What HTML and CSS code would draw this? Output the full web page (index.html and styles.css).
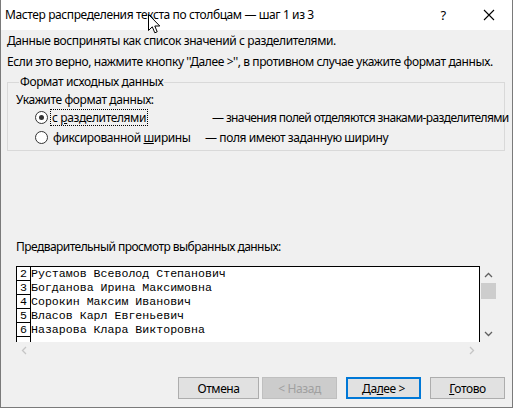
FILE: index.html
```html
<!DOCTYPE html>
<html lang="ru">
<head>
    <meta charset="UTF-8">
    <title>Мастер распределения текста по столбцам</title>
    <link rel="stylesheet" href="styles.css">
</head>
<body>
    <div class="window">
        <div class="titlebar">
            <span class="title">Мастер распределения текста по столбцам — шаг 1 из 3</span>
            <span class="tb-help">?</span>
            <span class="tb-close">
                <svg width="12" height="12" viewBox="0 0 12 12"><path d="M1 1L11 11M11 1L1 11" stroke="#000" stroke-width="1.1" fill="none"/></svg>
            </span>
            <svg class="cursor" width="13" height="20" viewBox="0 0 13 20">
                <path d="M0.5 0.5V16.5L4.3 12.8L6.8 18.8L9.2 17.8L6.8 12H11.8Z" fill="#fff" stroke="#000" stroke-width="1" stroke-linejoin="miter"/>
            </svg>
        </div>

        <div class="content">
            <p class="intro">Данные восприняты как список значений с разделителями.</p>
            <p class="intro">Если это верно, нажмите кнопку ''Далее &gt;'', в противном случае укажите формат данных.</p>

            <fieldset class="group">
                <legend>Формат исходных данных</legend>
                <div class="group-label">Укажите формат данных:</div>
                <div class="options">
                    <label class="radio">
                        <span class="dot checked"></span>
                        <span class="focus">с <u>р</u>азделителями</span>
                    </label>
                    <span class="desc first">— значения полей отделяются знаками-разделителями</span>
                    <label class="radio">
                        <span class="dot"></span>
                        <span class="plain">фиксированной <u>ш</u>ирины</span>
                    </label>
                    <span class="desc">— поля имеют заданную ширину</span>
                </div>
            </fieldset>

            <div class="preview-label">Предварительный просмотр выбранных данных:</div>
            <div class="preview">
                <div class="pane">
                    <div class="row"><span class="num">2</span><span class="cell">Рустамов Всеволод Степанович</span></div>
                    <div class="row"><span class="num">3</span><span class="cell">Богданова Ирина Максимовна</span></div>
                    <div class="row"><span class="num">4</span><span class="cell">Сорокин Максим Иванович</span></div>
                    <div class="row"><span class="num">5</span><span class="cell">Власов Карл Евгеньевич</span></div>
                    <div class="row"><span class="num">6</span><span class="cell">Назарова Клара Викторовна</span></div>
                    <div class="row"><span class="num"></span><span class="cell"></span></div>
                </div>
                <div class="vscroll">
                    <span class="arrow"><svg width="9" height="6" viewBox="0 0 9 6"><path d="M1 5L4.5 1.5L8 5" stroke="#606060" stroke-width="1.3" fill="none"/></svg></span>
                    <span class="thumb"></span>
                    <span class="track"></span>
                    <span class="arrow"><svg width="9" height="6" viewBox="0 0 9 6"><path d="M1 1L4.5 4.5L8 1" stroke="#606060" stroke-width="1.3" fill="none"/></svg></span>
                </div>
                <div class="hscroll">
                    <span class="arrow"><svg width="6" height="9" viewBox="0 0 6 9"><path d="M5 1L1.5 4.5L5 8" stroke="#c5c5c5" stroke-width="1.3" fill="none"/></svg></span>
                    <span class="arrow"><svg width="6" height="9" viewBox="0 0 6 9"><path d="M1 1L4.5 4.5L1 8" stroke="#c5c5c5" stroke-width="1.3" fill="none"/></svg></span>
                </div>
            </div>

            <div class="buttons">
                <button class="btn cancel">Отмена</button>
                <button class="btn disabled">&lt; Назад</button>
                <button class="btn default">Да<u>л</u>ее &gt;</button>
                <button class="btn"><u>Г</u>отово</button>
            </div>
        </div>
    </div>
</body>
</html>
```

FILE: styles.css
```css
/* Окно мастера */
body {
    margin: 0;
    background: #f0f0f0;
    font-family: "Noto Sans", "Open Sans", sans-serif;
    font-size: 12px;
    letter-spacing: -0.4px;
    color: #000;
}

.window {
    position: relative;
    width: 513px;
    height: 408px;
    box-sizing: border-box;
    border: 1px solid #7a7a7a;
    border-top: none;
    background: #f0f0f0;
}

/* Заголовок */
.titlebar {
    display: flex;
    align-items: center;
    height: 30px;
    background: #fff;
}

.title {
    flex: 1;
    padding-left: 4px;
    line-height: 30px;
}

.tb-help {
    width: 46px;
    text-align: center;
    font-size: 13px;
}

.tb-close {
    display: flex;
    justify-content: center;
    width: 46px;
}

.cursor {
    position: absolute;
    left: 147px;
    top: 14px;
}

/* Содержимое */
.content {
    padding: 0 7px 0 6px;
}

.intro {
    margin: 0;
    line-height: 21px;
    white-space: nowrap;
}

.group {
    margin: 2px 0 0;
    padding: 3px 0 3px 8px;
    border: 1px solid #d9d9d9;
    min-width: 0;
}

.group legend {
    margin-left: 3px;
    padding: 0 1px;
    line-height: 16px;
}

.group-label {
    line-height: 14px;
}

.options {
    display: grid;
    grid-template-columns: 170px auto;
    grid-auto-rows: 20px;
    align-items: center;
    padding-left: 19px;
}

.radio {
    display: flex;
    align-items: center;
}

.dot {
    width: 11px;
    height: 11px;
    border: 1px solid #333;
    border-radius: 50%;
    background: #fff;
    display: flex;
    align-items: center;
    justify-content: center;
    margin-right: 3px;
}

.dot.checked::after {
    content: "";
    width: 5px;
    height: 5px;
    border-radius: 50%;
    background: #333;
}

.focus {
    padding: 0 1px;
    line-height: 15px;
    outline: 1px dotted #000;
    outline-offset: 0;
}

.plain {
    padding-left: 2px;
}

.desc {
    white-space: nowrap;
}

.desc.first {
    margin-left: 7px;
    letter-spacing: -0.62px;
}

/* Предпросмотр */
.preview-label {
    margin: 88px 0 0 9px;
    line-height: 16px;
    letter-spacing: -0.55px;
}

.preview {
    display: grid;
    grid-template-columns: 464px 17px;
    grid-template-rows: 76px 16px;
    margin: 11px 0 0 9px;
}

.pane {
    border: 1px solid #000;
    border-bottom: none;
    background: #fff;
    overflow: hidden;
    font-family: "Liberation Mono", "Courier New", monospace;
    font-size: 11.6px;
    letter-spacing: 0;
}

.row {
    display: flex;
    height: 14px;
    line-height: 13px;
}

.num {
    width: 13px;
    border-right: 1px solid #000;
    border-bottom: 1px solid #000;
    text-align: center;
}

.cell {
    white-space: pre;
}

.vscroll {
    display: flex;
    flex-direction: column;
    background: #f0f0f0;
}

.vscroll .arrow {
    height: 17px;
    display: flex;
    align-items: center;
    justify-content: center;
}

.thumb {
    height: 16px;
    margin: 0 1px;
    background: #cdcdcd;
}

.track {
    flex: 1;
}

.hscroll {
    display: flex;
    justify-content: space-between;
    align-items: center;
    padding: 0 5px;
}

/* Кнопки */
.buttons {
    display: flex;
    justify-content: flex-end;
    gap: 9px;
    margin-top: 19px;
}

.btn {
    width: 75px;
    height: 22px;
    padding: 0;
    background: #e1e1e1;
    border: 1px solid #adadad;
    font-family: inherit;
    font-size: 12px;
    letter-spacing: -0.4px;
    color: #000;
}

.btn.cancel {
    width: 81px;
    margin-right: -6px;
}

.btn.default {
    border: 2px solid #0078d7;
}

.btn.disabled {
    background: #cccccc;
    border-color: #bfbfbf;
    color: #a0a0a0;
}
```
